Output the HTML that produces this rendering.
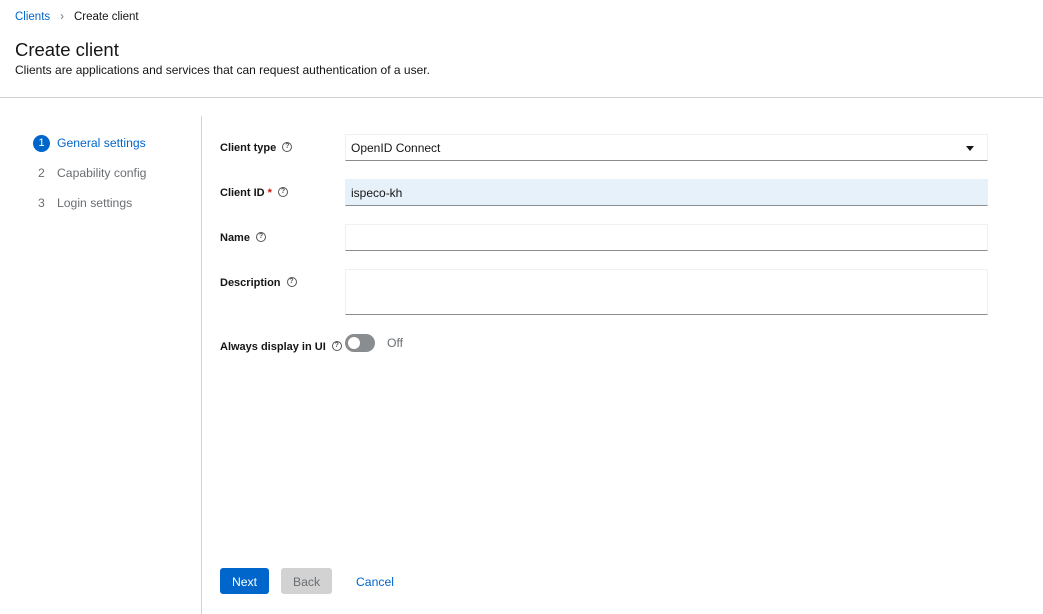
<!DOCTYPE html>
<html><head><style>
*{box-sizing:border-box;margin:0;padding:0}
body{width:1043px;height:614px;background:#fff;font-family:"Liberation Sans",sans-serif;color:#151515;position:relative;overflow:hidden;font-size:12px}
.a{position:absolute;white-space:nowrap}
.lbl{font-weight:bold;font-size:11px}
.q{display:inline-block;width:10px;height:10px;border:1px solid #555;border-radius:50%;font-size:7px;text-align:center;line-height:8px;font-weight:bold;color:#555;margin-left:6px;vertical-align:middle;margin-top:-2px}
.in{position:absolute;left:345px;width:643px;border:1px solid #f0f0f0;border-bottom:1px solid #8a8d90;background:#fff;font-size:12px;padding-left:5px}
</style></head><body>
<div class="a" style="left:15px;top:11px;font-size:11.5px"><span style="color:#0066cc">Clients</span><span style="color:#6a6e73;margin:0 10px">›</span>Create client</div>
<div class="a" style="left:15px;top:39px;font-size:18.5px">Create client</div>
<div class="a" style="left:15px;top:63px;font-size:12px">Clients are applications and services that can request authentication of a user.</div>
<div class="a" style="left:0;top:97px;width:1043px;height:1px;background:#d2d2d2"></div>
<div class="a" style="left:201px;top:116px;width:1px;height:498px;background:#d2d2d2"></div>
<div class="a" style="left:33px;top:135px;width:17px;height:17px;border-radius:50%;background:#0066cc;color:#fff;font-size:11px;text-align:center;line-height:17px">1</div>
<div class="a" style="left:57px;top:136px;color:#0066cc;font-size:12.2px">General settings</div>
<div class="a" style="left:38px;top:166px;color:#6a6e73;font-size:12.2px">2</div>
<div class="a" style="left:57px;top:166px;color:#6a6e73;font-size:12.2px">Capability config</div>
<div class="a" style="left:38px;top:196px;color:#6a6e73;font-size:12.2px">3</div>
<div class="a" style="left:57px;top:196px;color:#6a6e73;font-size:12.2px">Login settings</div>

<div class="a lbl" style="left:220px;top:142px">Client type<span class="q">?</span></div>
<div class="in" style="top:134px;height:27px;line-height:26px">OpenID Connect<span style="position:absolute;right:13px;top:11px;border-left:4px solid transparent;border-right:4px solid transparent;border-top:5px solid #151515"></span></div>
<div class="a lbl" style="left:220px;top:187px">Client ID <span style="color:#c9190b">*</span><span class="q">?</span></div>
<div class="in" style="top:179px;height:27px;line-height:26px;background:#e7f1fa;border-color:#e7f1fa #e7f1fa #8a8d90">ispeco-kh</div>
<div class="a lbl" style="left:220px;top:232px">Name<span class="q">?</span></div>
<div class="in" style="top:224px;height:27px"></div>
<div class="a lbl" style="left:220px;top:277px">Description<span class="q">?</span></div>
<div class="in" style="top:269px;height:46px"></div>
<div class="a lbl" style="left:220px;top:341px">Always display in UI<span class="q">?</span></div>
<div class="a" style="left:345px;top:334px;width:30px;height:18px;border-radius:9px;background:#8a8d90"><div style="position:absolute;left:3px;top:3px;width:12px;height:12px;border-radius:50%;background:#fff"></div></div>
<div class="a" style="left:387px;top:336px;color:#6a6e73;font-size:12.2px">Off</div>

<div class="a" style="left:220px;top:568px;width:49px;height:26px;background:#0066cc;color:#fff;border-radius:3px;text-align:center;line-height:28px;font-size:12.2px">Next</div>
<div class="a" style="left:281px;top:568px;width:51px;height:26px;background:#d2d2d2;color:#6a6e73;border-radius:3px;text-align:center;line-height:28px;font-size:12.2px">Back</div>
<div class="a" style="left:356px;top:575px;color:#0066cc;font-size:12.2px">Cancel</div>
</body></html>
